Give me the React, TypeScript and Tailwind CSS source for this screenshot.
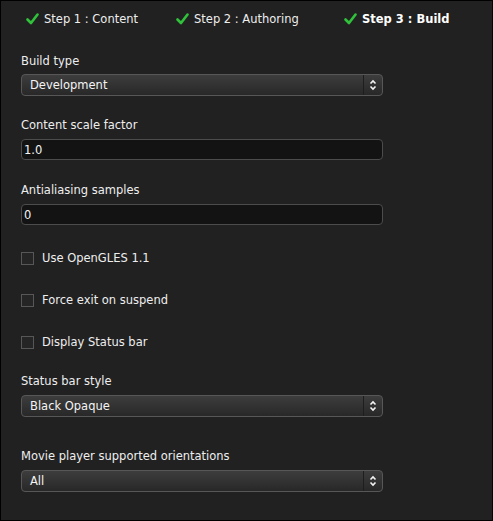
const font = { fontFamily: '"DejaVu Sans", "Liberation Sans", sans-serif' };

function Check() {
  return (
    <svg width="13" height="12" viewBox="0 0 13 12" className="shrink-0">
      <path d="M1.5 6.5 L5 10 L11.5 1.5" fill="none" stroke="#2fc23a" strokeWidth="2.6" strokeLinecap="round" strokeLinejoin="round" />
    </svg>
  );
}

function Step({ label, bold }: { label: string; bold?: boolean }) {
  return (
    <div className="flex items-center gap-[5px]">
      <Check />
      <span className={bold ? "font-bold text-white" : ""}>{label}</span>
    </div>
  );
}

function Select({ value, className }: { value: string; className: string }) {
  return (
    <div className={`flex h-[22px] w-[362px] items-center rounded-[4px] border border-[#575757] bg-gradient-to-b from-[#3d3d3d] to-[#282828] ${className}`}>
      <span className="flex-1 pl-[8px] text-[#f4f4f4]">{value}</span>
      <div className="flex h-full w-[19px] items-center justify-center border-l border-[#1e1e1e]">
        <svg width="8" height="12" viewBox="0 0 8 12">
          <path d="M1.5 4.5 L4 2 L6.5 4.5 M1.5 7.5 L4 10 L6.5 7.5" fill="none" stroke="#f4f4f4" strokeWidth="1.6" />
        </svg>
      </div>
    </div>
  );
}

function Input({ value, className }: { value: string; className: string }) {
  return (
    <div className={`flex h-[21px] w-[362px] items-center rounded-[4px] border border-[#4c4c4c] bg-[#131313] pl-[2px] text-[#f4f4f4] ${className}`}>
      {value}
    </div>
  );
}

function Checkbox({ label, className }: { label: string; className: string }) {
  return (
    <div className={`flex h-[14px] items-center gap-[8px] ${className}`}>
      <div className="h-[13px] w-[13px] border border-[#575757] bg-[#252525]" />
      <span>{label}</span>
    </div>
  );
}

export default function App() {
  return (
    <div
      style={font}
      className="h-[521px] w-[493px] border border-black bg-[#212121] text-[11.5px] leading-[14px] text-[#eeeeee]"
    >
      <div className="flex h-[36px] items-center pl-[25px]">
        <div className="w-[150px]"><Step label="Step 1 : Content" /></div>
        <div className="w-[168px]"><Step label="Step 2 : Authoring" /></div>
        <Step label="Step 3 : Build" bold />
      </div>
      <div className="pl-[20px]">
        <div className="mt-[17px]">Build type</div>
        <Select value="Development" className="mt-[6px]" />
        <div className="mt-[22px]">Content scale factor</div>
        <Input value="1.0" className="mt-[7px]" />
        <div className="mt-[23px]">Antialiasing samples</div>
        <Input value="0" className="mt-[7px]" />
        <Checkbox label="Use OpenGLES 1.1" className="mt-[26px]" />
        <Checkbox label="Force exit on suspend" className="mt-[28px]" />
        <Checkbox label="Display Status bar" className="mt-[28px]" />
        <div className="mt-[25px]">Status bar style</div>
        <Select value="Black Opaque" className="mt-[7px]" />
        <div className="mt-[32px]">Movie player supported orientations</div>
        <Select value="All" className="mt-[7px]" />
      </div>
    </div>
  );
}
